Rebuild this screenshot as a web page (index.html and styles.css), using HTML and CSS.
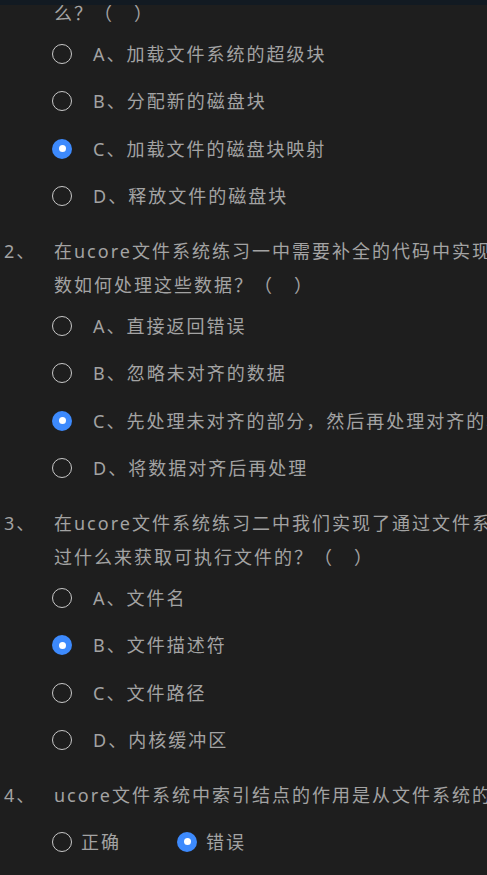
FILE: index.html
```html
<!DOCTYPE html>
<html lang="zh-CN">
<head>
<meta charset="utf-8">
<title>ucore 文件系统练习</title>
<link rel="stylesheet" href="styles.css">
</head>
<body>
<div class="topbar"></div>
<main class="quiz">
  <section class="question">
    <div class="q-head">
      <span class="q-num">1、</span>
      <p class="q-text">在ucore文件系统中，打开文件时sfs_load_inode函数主要做了什<br>么？（　）</p>
    </div>
    <ul class="options">
      <li class="option"><span class="radio"></span><span class="opt-text">A、加载文件系统的超级块</span></li>
      <li class="option"><span class="radio"></span><span class="opt-text">B、分配新的磁盘块</span></li>
      <li class="option"><span class="radio checked"></span><span class="opt-text">C、加载文件的磁盘块映射</span></li>
      <li class="option"><span class="radio"></span><span class="opt-text">D、释放文件的磁盘块</span></li>
    </ul>
  </section>
  <section class="question">
    <div class="q-head">
      <span class="q-num">2、</span>
      <p class="q-text">在ucore文件系统练习一中需要补全的代码中实现的读写函<br>数如何处理这些数据？（　）</p>
    </div>
    <ul class="options">
      <li class="option"><span class="radio"></span><span class="opt-text">A、直接返回错误</span></li>
      <li class="option"><span class="radio"></span><span class="opt-text">B、忽略未对齐的数据</span></li>
      <li class="option"><span class="radio checked"></span><span class="opt-text">C、先处理未对齐的部分，然后再处理对齐的块</span></li>
      <li class="option"><span class="radio"></span><span class="opt-text">D、将数据对齐后再处理</span></li>
    </ul>
  </section>
  <section class="question">
    <div class="q-head">
      <span class="q-num">3、</span>
      <p class="q-text">在ucore文件系统练习二中我们实现了通过文件系统加载程序，是通<br>过什么来获取可执行文件的？（　）</p>
    </div>
    <ul class="options">
      <li class="option"><span class="radio"></span><span class="opt-text">A、文件名</span></li>
      <li class="option"><span class="radio checked"></span><span class="opt-text">B、文件描述符</span></li>
      <li class="option"><span class="radio"></span><span class="opt-text">C、文件路径</span></li>
      <li class="option"><span class="radio"></span><span class="opt-text">D、内核缓冲区</span></li>
    </ul>
  </section>
  <section class="question">
    <div class="q-head">
      <span class="q-num">4、</span>
      <p class="q-text">ucore文件系统中索引结点的作用是从文件系统的磁盘上读取数据。</p>
    </div>
    <ul class="judge">
      <li class="judge-item"><span class="radio"></span><span class="opt-text">正确</span></li>
      <li class="judge-item"><span class="radio checked"></span><span class="opt-text">错误</span></li>
    </ul>
  </section>
</main>
</body>
</html>
```
FILE: styles.css
```css
html, body {
  margin: 0;
  padding: 0;
  background: #1e1e1e;
  overflow: hidden;
}
body {
  width: 487px;
  height: 875px;
  font-family: "Noto Sans", "Noto Sans CJK SC", sans-serif;
  font-size: 18px;
  letter-spacing: 2px;
  color: #a3a3a3;
}
.topbar {
  position: fixed;
  top: 0;
  left: 0;
  right: 0;
  height: 5px;
  background: #121a22;
  z-index: 2;
}
.quiz {
  width: 700px;
  margin-top: -38px;
}
.question {
  margin-top: 14px;
}
.question:first-child {
  margin-top: 0;
}
.q-head {
  display: flex;
  padding-left: 4px;
}
.q-num {
  flex: 0 0 50px;
  line-height: 34px;
  white-space: nowrap;
}
.q-text {
  margin: 0;
  line-height: 34px;
  white-space: nowrap;
}
.options, .judge {
  list-style: none;
  margin: 0;
  padding: 0 0 0 52px;
}
.option {
  display: flex;
  align-items: center;
  gap: 21px;
  height: 47.5px;
  white-space: nowrap;
}
.judge {
  display: flex;
  gap: 56px;
  margin-top: 6px;
}
.judge-item {
  display: flex;
  align-items: center;
  gap: 9px;
  height: 47.5px;
}
.radio {
  flex: 0 0 auto;
  box-sizing: border-box;
  width: 20px;
  height: 20px;
  border-radius: 50%;
  border: 1.5px solid #c9c9c9;
  display: flex;
  align-items: center;
  justify-content: center;
}
.radio.checked {
  border: none;
  background: #3d8afd;
}
.radio.checked::after {
  content: "";
  width: 7px;
  height: 7px;
  border-radius: 50%;
  background: #ffffff;
}
.opt-text {
  line-height: 1;
}
```
